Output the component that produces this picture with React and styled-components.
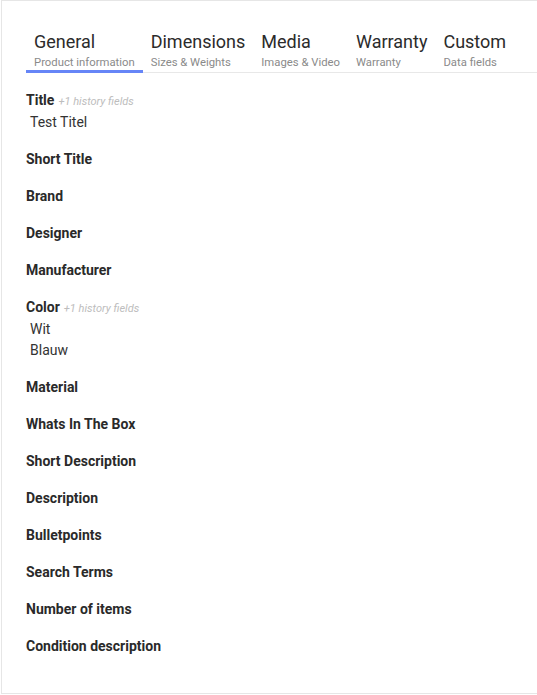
import React from 'react'
import styled, { createGlobalStyle } from "styled-components";

const GlobalStyle = createGlobalStyle`
  body {
    margin: 0;
    background: #fff;
    font-family: Roboto, "Liberation Sans", sans-serif;
    color: #333;
  }
`

const Card = styled.div`
  margin-left: 1px;
  border: 1px solid #e6e6e6;
  border-right: none;
  background: #fff;
  padding: 30px 0 36px 24px;
`

const TabBar = styled.div`
  display: flex;
  border-bottom: 1px solid #e8e8e8;
`

const Tab = styled.div`
  display: flex;
  flex-direction: column;
  padding: 0 8px;
  border-bottom: 3px solid ${p => (p.active ? "#6685f7" : "transparent")};
  margin-bottom: -1px;
  cursor: pointer;
`

const TabTitle = styled.span`
  font-size: 18px;
  line-height: 22px;
  color: #2b2b2b;
`

const TabSub = styled.span`
  margin-top: 3px;
  font-size: 11.3px;
  line-height: 14px;
  color: #8a8a8a;
`

const Fields = styled.div`
  display: flex;
  flex-direction: column;
  gap: 16px;
  padding-top: 17px;
`

const Field = styled.div`
  display: flex;
  flex-direction: column;
`

const Label = styled.div`
  font-size: 14px;
  line-height: 21px;
  font-weight: 700;
  color: #2a2a2a;
`

const History = styled.span`
  margin-left: 4px;
  font-size: 11px;
  font-weight: 400;
  font-style: italic;
  color: #bdbdbd;
`

const Value = styled.div`
  padding-left: 4px;
  font-size: 14px;
  line-height: 21px;
  color: #333;
`

const tabs = [
  { title: "General", sub: "Product information" },
  { title: "Dimensions", sub: "Sizes & Weights" },
  { title: "Media", sub: "Images & Video" },
  { title: "Warranty", sub: "Warranty" },
  { title: "Custom", sub: "Data fields" },
]

const fields = [
  { label: "Title", history: 1, values: ["Test Titel"] },
  { label: "Short Title" },
  { label: "Brand" },
  { label: "Designer" },
  { label: "Manufacturer" },
  { label: "Color", history: 1, values: ["Wit", "Blauw"] },
  { label: "Material" },
  { label: "Whats In The Box" },
  { label: "Short Description" },
  { label: "Description" },
  { label: "Bulletpoints" },
  { label: "Search Terms" },
  { label: "Number of items" },
  { label: "Condition description" },
]

export default function App() {
  return (
    <>
      <GlobalStyle />
      <Card>
        <TabBar>
          {tabs.map((t, i) => (
            <Tab key={t.title} active={i === 0}>
              <TabTitle>{t.title}</TabTitle>
              <TabSub>{t.sub}</TabSub>
            </Tab>
          ))}
        </TabBar>
        <Fields>
          {fields.map(f => (
            <Field key={f.label}>
              <Label>
                {f.label}
                {f.history && <History>+{f.history} history fields</History>}
              </Label>
              {(f.values || []).map(v => <Value key={v}>{v}</Value>)}
            </Field>
          ))}
        </Fields>
      </Card>
    </>
  )
}
